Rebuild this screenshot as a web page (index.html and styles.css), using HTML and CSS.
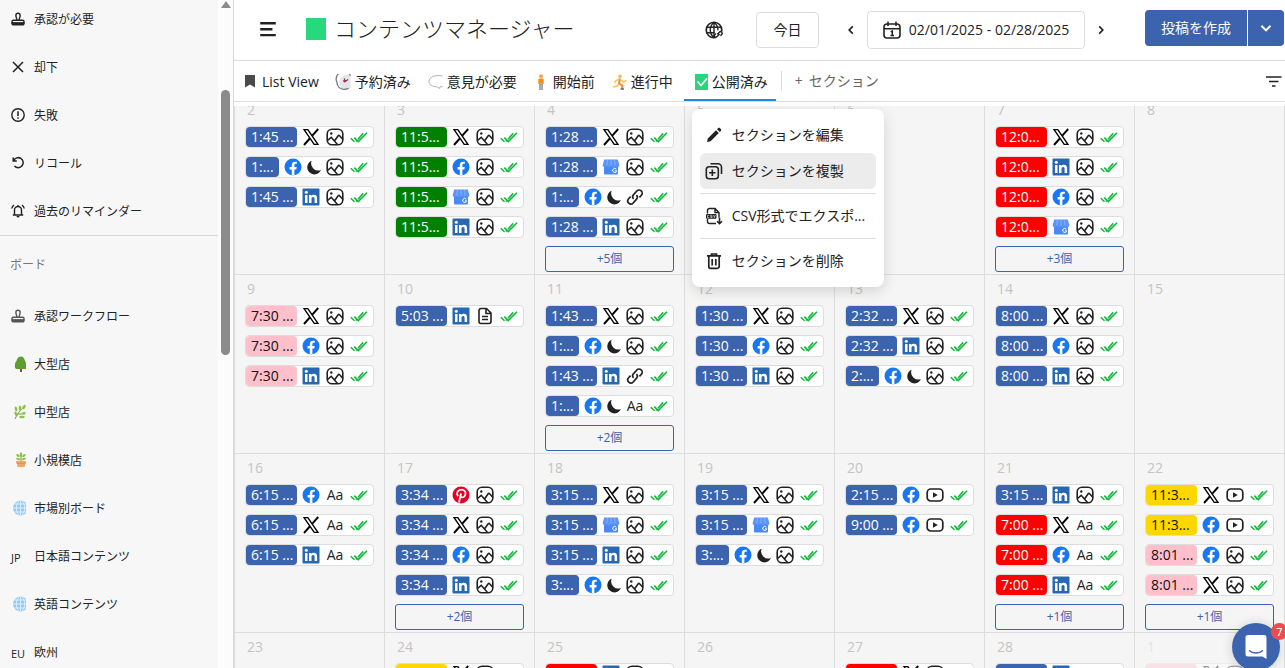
FILE: index.html
```html
<!DOCTYPE html>
<html lang="ja">
<head>
<meta charset="utf-8">
<title>コンテンツマネージャー</title>
<link rel="stylesheet" href="styles.css">
</head>
<body>
<svg class="sprite" aria-hidden="true">
  <symbol id="i-stamp" viewBox="0 0 16 16"><path d="M6.900 9.200c0-1.900-1-2.800-1-4.800a2.100 2.100 0 0 1 4.200 0c0 2-1 2.900-1 4.800M2 12V10.600c0-.8.500-1.300 1.300-1.300h9.400c.8 0 1.300.5 1.300 1.300V12z" fill="none" stroke="currentColor" stroke-width="1.400"/><path d="M1.500 11.500h13v1.500a1.500 1.500 0 0 1-1.500 1.500H3A1.500 1.500 0 0 1 1.500 13z" fill="currentColor"/></symbol>
  <symbol id="i-close" viewBox="0 0 16 16"><path d="M3 3l10 10M13 3L3 13" stroke="currentColor" stroke-width="1.500" fill="none"/></symbol>
  <symbol id="i-alert" viewBox="0 0 16 16"><circle cx="8" cy="8" r="6.200" fill="none" stroke="currentColor" stroke-width="1.400"/><path d="M8 4.300v4.700M8 10.200v1.500" stroke="currentColor" stroke-width="1.500"/></symbol>
  <symbol id="i-undo" viewBox="0 0 16 16"><path d="M3.200 2.500v3.600h3.600M3.600 5.700A5 5 0 1 1 4.500 11" fill="none" stroke="currentColor" stroke-width="1.500"/></symbol>
  <symbol id="i-bell" viewBox="0 0 16 16"><path d="M4.500 12V7a3.500 3.500 0 0 1 7 0v5M2.800 12h10.400M1.800 5.500C2 4 2.700 3 4 2.200M14.200 5.500C14 4 13.300 3 12 2.200M8 2v1.500" fill="none" stroke="currentColor" stroke-width="1.400"/><path d="M6.500 13h3a1.500 1.500 0 0 1-3 0z" fill="currentColor"/></symbol>
  <symbol id="i-tree" viewBox="0 0 16 16"><path d="M10 11h2v5h-2z" fill="#7b5336"/><path d="M11 .5c2 0 3 1.500 3.500 3 1 1.500 1.500 3 1.500 4.500V13H7c-2 0-2.500-2-2-3.500-.3-2 .5-3.500 1.500-4.500C7 2.500 8.500.5 11 .5z" fill="#5c9e31"/></symbol>
  <symbol id="i-herb" viewBox="0 0 16 16"><path d="M5 15c2-5 5-9 10-13M8 10h7" stroke="#689f38" stroke-width="1" fill="none"/><g fill="#8bc34a"><ellipse cx="6" cy="5" rx="1.300" ry="2.600" transform="rotate(-15 6 5)"/><ellipse cx="10" cy="4" rx="1.300" ry="2.600"/><ellipse cx="14" cy="3" rx="1.300" ry="2.500" transform="rotate(30 14 3)"/><ellipse cx="6" cy="10" rx="1.300" ry="2.600" transform="rotate(-30 6 10)"/><ellipse cx="12" cy="13" rx="2.800" ry="1.200"/><ellipse cx="14" cy="9" rx="2" ry="1.100"/></g></symbol>
  <symbol id="i-pot" viewBox="0 0 16 16"><path d="M11 9V3" stroke="#689f38"/><g fill="#8bc34a"><ellipse cx="11" cy="2.500" rx="1.200" ry="2.300"/><ellipse cx="8" cy="3.500" rx="2" ry="1.100" transform="rotate(35 8 3.500)"/><ellipse cx="14" cy="3.500" rx="2" ry="1.100" transform="rotate(-35 14 3.500)"/><ellipse cx="8.200" cy="7" rx="2.200" ry="1.100" transform="rotate(20 8.200 7)"/><ellipse cx="13.800" cy="7" rx="2.200" ry="1.100" transform="rotate(-20 13.800 7)"/></g><path d="M6 9h10v2.500h-.8L14.800 15H7.500L7 11.500H6z" fill="#f0a868"/><path d="M7 11.300h8.300" stroke="#cf8345" stroke-width=".7"/></symbol>
  <symbol id="i-world" viewBox="0 0 16 16"><circle cx="10.500" cy="8" r="7.500" fill="#90caf9"/><path d="M10.500.5v15M3 8h13M4.500 4h11.500M4.500 12h11.500M9 .8c-3.500 4-3.500 10.400 0 14.400M12 .8c3.500 4 3.500 10.400 0 14.400" stroke="#e3f2fd" stroke-width=".9" fill="none"/></symbol>

  <symbol id="i-bookmark" viewBox="0 0 16 16"><path d="M3 1h10v12.500l-5-3-5 3z" fill="#4a4a4a"/></symbol>
  <symbol id="i-clock" viewBox="0 0 16 16"><path d="M15.500 1.800A7 7 0 0 0 8.500 1.800 7.300 7.300 0 0 0 8 14.500c2 1.200 5 1.200 7.500.2z" fill="#e4e4e9"/><path d="M15.500 1.600A7.200 7.200 0 0 0 2 8.500c0 4 3 6.800 7 6.800 1.500 0 3-.4 4.500-1" fill="none" stroke="#777" stroke-width="1.300"/><path d="M9.500 8V4.500M9.500 8l3.500-2.500" stroke="#444" stroke-width="1.100"/><circle cx="9.500" cy="7" r="1.300" fill="#c2185b"/></symbol>
  <symbol id="i-balloon" viewBox="0 0 16 16"><path d="M15.500 2C8 .5 2 3 2 7.500c0 3 2.500 5 7.500 5.200l3 1.800.5-1.800h2.500" fill="none" stroke="#aaa" stroke-width=".9"/></symbol>
  <symbol id="i-stand" viewBox="0 0 16 16"><circle cx="8" cy="2.200" r="1.900" fill="#f3a34a"/><path d="M6 4.500h4v5H6z" fill="#f28c1b"/><path d="M5.500 5v5M10.500 5v5" stroke="#f5b942" stroke-width="1"/><path d="M6.200 9.500h3.600v6.500H8.300V10.500h-.6V16H6.200z" fill="#8d8d8d"/></symbol>
  <symbol id="i-run" viewBox="0 0 16 16"><circle cx="9" cy="2.200" r="1.800" fill="#ffb74d"/><path d="M9 4.500L8 9.500l3.500 2-.5 3.500" stroke="#f08a24" stroke-width="2" fill="none"/><path d="M8.500 5L5 6.500 3.500 9M9.500 5.500l3 2.500 3-1.500M8 9.500L6 12l-4 1" stroke="#ffbf5b" stroke-width="1.500" fill="none"/><path d="M9.500 15h3.500" stroke="#5b6f7c" stroke-width="1.500"/></symbol>
  <symbol id="i-done" viewBox="0 0 16 16"><path d="M3 0h13v16H3z" fill="#25d67b"/><path d="M5.500 7.500l3.500 4 6-7" stroke="#fff" stroke-width="1.800" fill="none"/></symbol>
  <symbol id="i-filter" viewBox="0 0 16 16"><path d="M0 4h15.500M3 8.500h9.500M6 13h3.500" stroke="#222" stroke-width="1.700"/></symbol>

  <symbol id="i-menu" viewBox="0 0 18 18"><path d="M2 3h14M2 8.300h11M2 13.600h14" stroke="#222" stroke-width="2.200"/></symbol>
  <symbol id="i-globe" viewBox="0 0 18 18"><circle cx="9" cy="9" r="7" fill="none" stroke="#222" stroke-width="1.500"/><path d="M9 2v14M2 6.500h14M2 11.500h9M9 2c-4.500 4-4.500 10 0 14M9 2c3 2.500 3.800 4.500 3.600 7.500" fill="none" stroke="#222" stroke-width="1.300"/><circle cx="13" cy="13" r="3.500" fill="#fff"/><path d="M12 12.800l2-2a1.500 1.500 0 0 1 2.100 2.100l-1.300 1.300M14 12.500l-2.700 2.700a1.300 1.300 0 0 1-1.700-1.900l1.200-1.200" fill="none" stroke="#222" stroke-width="1.300"/></symbol>
  <symbol id="i-calendar" viewBox="0 0 18 18"><rect x="1" y="3" width="16" height="14" rx="3" fill="none" stroke="#222" stroke-width="1.600"/><path d="M1 7.700h16M5 .5v4.500M13 .5v4.500M7.800 10.800L9.300 10v4.500M7.500 14.500h3.500" stroke="#222" stroke-width="1.500" fill="none"/></symbol>
  <symbol id="i-left" viewBox="0 0 10 10"><path d="M6.500 2L3.500 5l3 3" fill="none" stroke="#222" stroke-width="1.400"/></symbol>
  <symbol id="i-right" viewBox="0 0 10 10"><path d="M3.500 2l3 3-3 3" fill="none" stroke="#222" stroke-width="1.400"/></symbol>
  <symbol id="i-down" viewBox="0 0 10 10"><path d="M1.200 3.200L5 7l3.800-3.800" fill="none" stroke="#fff" stroke-width="1.700"/></symbol>

  <symbol id="i-pencil" viewBox="0 0 18 18"><path d="M2 16l.8-3.600L11 4.200l2.800 2.800-8.200 8.200zM12 3.200l1-1c.6-.6 1.400-.6 2 0l.8.8c.6.6.6 1.400 0 2l-1 1z" fill="#222"/></symbol>
  <symbol id="i-copy" viewBox="0 0 18 18"><rect x="1.300" y="4.800" width="12" height="12" rx="2.800" fill="none" stroke="#222" stroke-width="1.600"/><path d="M7.300 7.600v6.400M4.100 10.800h6.400M5.500 1.800h7.500a3.500 3.500 0 0 1 3.500 3.500v6.700" fill="none" stroke="#222" stroke-width="1.600"/></symbol>
  <symbol id="i-csv" viewBox="0 0 18 18"><path d="M2.500 6.500V3.500a2 2 0 0 1 2-2H10l4 4v5M10 1.500v4h4M2.500 12v2.500a2 2 0 0 0 2 2H11" fill="none" stroke="#222" stroke-width="1.400"/><rect x="1" y="7" width="10.500" height="4.800" rx="1" fill="#222"/><path d="M4.200 8.300H2.500v2.300h1.700M7.300 8.300H5.600v1.100h1.500v1.200H5.500M8.500 8l.9 2.600.9-2.600" fill="none" stroke="#fff" stroke-width=".6"/><path d="M14.500 10.500v6M12 14.200l2.500 2.500 2.500-2.500" fill="none" stroke="#222" stroke-width="1.600"/></symbol>
  <symbol id="i-trash" viewBox="0 0 18 18"><path d="M2 3.800h14M6.500 3.500V2h5v1.500M3.800 4v10.500a1.800 1.800 0 0 0 1.800 1.800h6.800a1.800 1.800 0 0 0 1.800-1.800V4M7.200 7v6.500M10.800 7v6.500" fill="none" stroke="#222" stroke-width="1.700"/></symbol>

  <symbol id="i-x" viewBox="0 0 18 18"><path d="M.8 1h5.400l11 16h-5.400zM3.300 2.200l9.300 13.600h2.100L5.400 2.200z" fill="#000" fill-rule="evenodd"/><path d="M16.200 1L10.300 7.600M7.800 10.500L2 17" stroke="#000" stroke-width="1.900"/></symbol>
  <symbol id="i-facebook" viewBox="0 0 18 18"><circle cx="9" cy="9" r="8.500" fill="#1877f2"/><path d="M7.800 17.500v-6H5.600V9h2.200V7.100c0-2.200 1.300-3.400 3.300-3.400.9 0 1.700.1 1.700.1v2h-1c-1 0-1.400.6-1.400 1.300V9h2.300l-.4 2.500h-1.900v6z" fill="#fff"/></symbol>
  <symbol id="i-linkedin" viewBox="0 0 18 18"><rect x=".5" y=".5" width="17" height="17" rx="1" fill="#2867b2"/><path d="M3 7h2.500v8H3zM7 7h2.400v1.100c.5-.8 1.400-1.300 2.500-1.300 2.300 0 3.200 1.400 3.200 3.700V15h-2.500v-4c0-1.200-.3-2.100-1.500-2.100S9.500 9.800 9.500 11v4H7z" fill="#fff"/><circle cx="4.300" cy="4.300" r="1.500" fill="#fff"/></symbol>
  <symbol id="i-business" viewBox="0 0 18 18"><path d="M2 7h14v8.500a1 1 0 0 1-1 1H3a1 1 0 0 1-1-1z" fill="#4989f5"/><path d="M2.200 1.500h13.600L17.300 7a2 2 0 0 1-4.100.5A2.100 2.100 0 0 1 9 7.500a2.100 2.100 0 0 1-4.200 0A2 2 0 0 1 .7 7z" fill="#5b94f8"/><path d="M5.500 1.500L4.800 7.500M9 1.500v6M12.500 1.500l.7 6" stroke="#a5c4fb" stroke-width=".6"/><path d="M14.300 11.200a2 2 0 1 0 .4 1.600h-1.700" fill="none" stroke="#fff" stroke-width="1"/></symbol>
  <symbol id="i-pinterest" viewBox="0 0 18 18"><circle cx="9" cy="9" r="8.500" fill="#e60023"/><path d="M7 16.500L9 7.500M6 10.200c-2.200-3.200-.1-6.500 3.400-6.500 3 0 4.600 2 4 4.600-.6 3.200-3.900 4-5 1.900" fill="none" stroke="#fff" stroke-width="1.800"/></symbol>
  <symbol id="i-image" viewBox="0 0 18 18"><rect x="1.200" y="1.200" width="15.600" height="15.600" rx="4.800" fill="none" stroke="#222" stroke-width="1.600"/><circle cx="5.300" cy="5.500" r="1.200" fill="#222"/><path d="M1.500 12.500L5.200 9.300l6.300 7.200M8.800 12.500l3.400-4.800c.4-.5 1-.5 1.400 0L17 11.500" fill="none" stroke="#222" stroke-width="1.600"/></symbol>
  <symbol id="i-video" viewBox="0 0 18 18"><rect x="1.200" y="3" width="15.600" height="12" rx="3.500" fill="none" stroke="#222" stroke-width="1.700"/><path d="M7 6.300L11.800 9 7 11.700z" fill="#222"/></symbol>
  <symbol id="i-link" viewBox="0 0 18 18"><path d="M7.600 10.800a3 3 0 0 1 0-4.200l3.200-3.600a3 3 0 0 1 4.600 4.200l-2 2.200M10.400 7.200a3 3 0 0 1 0 4.200L7.200 15a3 3 0 0 1-4.600-4.200l2-2.200" fill="none" stroke="#222" stroke-width="1.700"/></symbol>
  <symbol id="i-doc" viewBox="0 0 18 18"><path d="M3 3.500a2 2 0 0 1 2-2h5.500L15 6v8.500a2 2 0 0 1-2 2H5a2 2 0 0 1-2-2zM10 1.500v5h5M6 9.500h6M6 12.500h6" fill="none" stroke="#222" stroke-width="1.600"/></symbol>
  <symbol id="i-moon" viewBox="0 0 18 18"><path d="M6.300 2A8.200 8.200 0 0 0 16.800 12.500 8 8 0 1 1 6.300 2z" fill="#222"/></symbol>
  <symbol id="i-check" viewBox="0 0 18 18"><path d="M.8 10.200l3.700 3.600M4.300 9.600l4 4L17 4.800M5.800 13.500l1-1M8 11.200l5.200-5.800" fill="none" stroke="#12b83c" stroke-width="1.600"/></symbol>
</svg>

<div class="app">
  <nav class="sidebar">
    <ul class="side-list side-top">
      <li><a href="#"><svg><use href="#i-stamp"/></svg>承認が必要</a></li>
      <li><a href="#"><svg><use href="#i-close"/></svg>却下</a></li>
      <li><a href="#"><svg><use href="#i-alert"/></svg>失敗</a></li>
      <li><a href="#"><svg><use href="#i-undo"/></svg>リコール</a></li>
      <li><a href="#"><svg><use href="#i-bell"/></svg>過去のリマインダー</a></li>
    </ul>
    <h2 class="side-heading">ボード</h2>
    <ul class="side-list">
      <li><a href="#"><svg class="muted"><use href="#i-stamp"/></svg>承認ワークフロー</a></li>
      <li><a href="#"><svg><use href="#i-tree"/></svg>大型店</a></li>
      <li><a href="#"><svg><use href="#i-herb"/></svg>中型店</a></li>
      <li><a href="#"><svg><use href="#i-pot"/></svg>小規模店</a></li>
      <li><a href="#"><svg><use href="#i-world"/></svg>市場別ボード</a></li>
      <li><a href="#"><span class="code">JP</span>日本語コンテンツ</a></li>
      <li><a href="#"><svg><use href="#i-world"/></svg>英語コンテンツ</a></li>
      <li><a href="#"><span class="code">EU</span>欧州</a></li>
    </ul>
  </nav>
  <div class="scroll-track"><span class="scroll-arrow"></span><span class="scroll-thumb"></span></div>

  <main class="main">
    <header class="header">
      <button class="icon-btn" aria-label="メニュー"><svg><use href="#i-menu"/></svg></button>
      <span class="swatch"></span>
      <h1 class="title">コンテンツマネージャー</h1>
      <button class="icon-btn globe" aria-label="共有"><svg><use href="#i-globe"/></svg></button>
      <button class="today">今日</button>
      <div class="range">
        <button class="step" aria-label="前へ"><svg><use href="#i-left"/></svg></button>
        <button class="dates"><svg><use href="#i-calendar"/></svg>02/01/2025 - 02/28/2025</button>
        <button class="step" aria-label="次へ"><svg><use href="#i-right"/></svg></button>
      </div>
      <div class="create">
        <button class="create-main">投稿を作成</button>
        <button class="create-more" aria-label="その他"><svg><use href="#i-down"/></svg></button>
      </div>
    </header>

    <div class="tabs">
      <button class="tab"><svg><use href="#i-bookmark"/></svg>List View</button>
      <button class="tab"><svg><use href="#i-clock"/></svg>予約済み</button>
      <button class="tab"><svg><use href="#i-balloon"/></svg>意見が必要</button>
      <button class="tab"><svg><use href="#i-stand"/></svg>開始前</button>
      <button class="tab"><svg><use href="#i-run"/></svg>進行中</button>
      <div class="tab-wrap">
        <button class="tab active"><svg><use href="#i-done"/></svg>公開済み</button>
        <div class="menu">
          <button class="menu-item"><svg><use href="#i-pencil"/></svg>セクションを編集</button>
          <button class="menu-item hover"><svg><use href="#i-copy"/></svg>セクションを複製</button>
          <hr>
          <button class="menu-item"><svg><use href="#i-csv"/></svg>CSV形式でエクスポ...</button>
          <hr>
          <button class="menu-item"><svg><use href="#i-trash"/></svg>セクションを削除</button>
        </div>
      </div>
      <button class="add-section"><span>+</span>セクション</button>
      <button class="filter" aria-label="フィルター"><svg><use href="#i-filter"/></svg></button>
    </div>

    <div class="calendar"><div class="grid" id="grid"></div></div>
  </main>
</div>

<button class="chat" aria-label="チャット">
  <svg viewBox="0 0 24 26"><path d="M4 1h16a2.500 2.500 0 0 1 2.500 2.500V25l-4-2.500H4A2.500 2.500 0 0 1 1.500 20V3.500A2.500 2.500 0 0 1 4 1z" fill="#fff"/><path d="M5 16.500c4 3.300 10 3.300 14 0" fill="none" stroke="#3b63ae" stroke-width="1.500"/></svg>
  <span class="badge">7</span>
</button>
<script src="app.js"></script>
</body>
</html>
```
FILE: styles.css
```css
* { box-sizing: border-box; }
body {
  margin: 0;
  font: 14px/20px "Open Sans", "Noto Sans CJK JP", sans-serif;
  color: #222;
  background: #fff;
}
button {
  font: inherit;
  color: inherit;
  background: none;
  border: 0;
  padding: 0;
  white-space: nowrap;
}
ul { list-style: none; margin: 0; padding: 0; }
a { color: inherit; text-decoration: none; }
svg { display: block; flex: none; }
.sprite { position: absolute; width: 0; height: 0; }

.app { display: flex; height: 100vh; overflow: hidden; }

.sidebar { flex: 0 0 218px; background: #f7f7f7; overflow: hidden; font-size: 12px; }
.side-top { margin-top: -5px; border-bottom: 1px solid #d8d8d8; }
.side-list a { display: flex; align-items: center; gap: 8px; height: 48px; padding: 2px 0 0 10px; }
.side-list svg { width: 16px; height: 16px; margin-bottom: 2px; }
.side-list .muted { color: #555; }
.code { width: 16px; font-size: 11px; font-weight: 500; padding: 1px 0 0 1px; white-space: nowrap; }
.side-heading { margin: 0; padding: 19px 10px 17px; font-size: 12px; font-weight: 400; color: #777; }

.scroll-track { flex: 0 0 16px; display: flex; flex-direction: column; align-items: center; background: #fcfcfc; border-right: 1px solid #d8d8d8; }
.scroll-arrow { border: 5px solid transparent; border-top: 0; border-bottom: 7px solid #8b8b8b; margin: 1px 0 82px; }
.scroll-thumb { width: 9px; height: 265px; border-radius: 5px; background: #8b8b8b; }

.main { flex: 1; min-width: 0; display: flex; flex-direction: column; }

.header { display: flex; align-items: center; height: 61px; padding: 0 1px 0 24px; border-bottom: 1px solid #ddd; }
.icon-btn svg { width: 20px; height: 20px; }
.swatch { width: 20px; height: 22px; margin: 0 8px 2px 28px; background: #25d97c; }
.title { margin: 0 0 4px; font-size: 22px; line-height: 32px; font-weight: 300; white-space: nowrap; }
.globe { margin-left: auto; }
.today { width: 63px; height: 36px; margin: 0 22px 0 32px; border: 1px solid #ddd; border-radius: 4px; }
.range { display: flex; align-items: center; gap: 6px; }
.step svg { width: 20px; height: 12px; }
.dates { display: flex; align-items: center; justify-content: center; gap: 8px; width: 218px; height: 38px; border: 1px solid #ddd; border-radius: 4px; }
.dates svg { width: 18px; height: 18px; }
.create { display: flex; height: 36px; margin: 0 0 4px 34px; border-radius: 4px; overflow: hidden; color: #fff; }
.create-main { width: 102px; background: #3b63ae; }
.create-more { width: 37px; border-left: 1px solid #fff; background: #3b63ae; }
.create-more svg { width: 12px; height: 12px; margin: auto; }

.tabs { display: flex; align-items: stretch; height: 41px; border-bottom: 1px solid #ddd; }
.tab { display: flex; align-items: center; gap: 4px; height: 40px; padding: 3px 8px 0; border-bottom: 2px solid transparent; }
.tab svg { width: 16px; height: 16px; }
.tab.active { border-bottom-color: #1e88e5; }
.tab-wrap { position: relative; margin-left: 3px; }
.add-section { display: flex; gap: 6px; align-self: center; height: 20px; margin-left: 5px; padding-left: 13px; border-left: 1px solid #ddd; color: #666; }
.filter { margin-left: auto; padding-right: 3px; }
.filter svg { width: 16px; height: 16px; }

.menu { position: absolute; z-index: 2; top: 48px; left: 8px; width: 192px; padding: 8px; border-radius: 8px; background: #fff; box-shadow: 0 4px 14px rgba(0, 0, 0, .14); }
.menu-item { display: flex; align-items: center; gap: 9px; width: 100%; height: 36px; padding: 0 5px; border-radius: 6px; }
.menu-item.hover { background: #ececec; }
.menu-item svg { width: 18px; height: 18px; }
.menu hr { margin: 4px 0; border: 0; border-top: 1px solid #ddd; }

.calendar { flex: 1; min-height: 0; margin-top: 4px; overflow: hidden; background: #f5f5f5; }
.grid { display: grid; grid-template-columns: repeat(7, 1fr); margin-top: -10px; border-left: 1px solid #ddd; }
.day { display: flex; flex-direction: column; gap: 8px; min-height: 179px; min-width: 0; padding: 4px 10px 2px; border: solid #ddd; border-width: 0 1px 1px 0; }
.num { padding: 0 2px; height: 18px; color: #c4c4c4; }
.post { display: flex; align-items: center; height: 22px; padding-right: 2px; border: 1px solid #ddd; border-radius: 4px; background: #fff; }
.time { flex: 1; min-width: 0; margin-right: 2px; padding-left: 5px; border-radius: 4px; color: #fff; white-space: nowrap; overflow: hidden; }
.post svg { width: 18px; height: 18px; margin: 0 3px; }
.post .moon { width: 16px; height: 16px; margin: 0 1px; }
.aa { width: 24px; font-size: 14px; font-weight: 500; text-align: center; }
.blue { background: #3b63ae; }
.green { background: #008000; }
.red { background: #f00; }
.pink { background: #ffc0cb; color: #111; }
.yellow { background: #ffd700; color: #111; }
.more { height: 26px; border: 1px solid #3b63ae; border-radius: 3px; color: #3b63ae; font-size: 12px; }
.outside > * { opacity: .35; }

.chat { position: fixed; z-index: 3; right: 5px; bottom: -3px; width: 48px; height: 48px; border-radius: 50%; background: #3b63ae; box-shadow: 0 1px 12px rgba(0, 0, 0, .16); }
.chat svg { width: 24px; height: 26px; margin: auto; }
.badge { position: absolute; top: 0; right: -8px; width: 17px; height: 17px; border-radius: 50%; background: #f9484b; color: #fff; font-size: 11px; font-weight: 600; line-height: 17px; text-align: center; }
```
FILE: app.js
```js
// Each post: colour, time label, network, media type, optional dark-post flag.
const days = [
  [2, ['blue|1:45 ...|x|image', 'blue|1:...|facebook|image|moon', 'blue|1:45 ...|linkedin|image']],
  [3, ['green|11:5...|x|image', 'green|11:5...|facebook|image', 'green|11:5...|business|image', 'green|11:5...|linkedin|image']],
  [4, ['blue|1:28 ...|x|image', 'blue|1:28 ...|business|image', 'blue|1:...|facebook|link|moon', 'blue|1:28 ...|linkedin|image'], 5],
  [5, []],
  [6, []],
  [7, ['red|12:0...|x|image', 'red|12:0...|linkedin|image', 'red|12:0...|facebook|image', 'red|12:0...|business|image'], 3],
  [8, []],
  [9, ['pink|7:30 ...|x|image', 'pink|7:30 ...|facebook|image', 'pink|7:30 ...|linkedin|image']],
  [10, ['blue|5:03 ...|linkedin|doc']],
  [11, ['blue|1:43 ...|x|image', 'blue|1:...|facebook|image|moon', 'blue|1:43 ...|linkedin|link', 'blue|1:...|facebook|aa|moon'], 2],
  [12, ['blue|1:30 ...|x|image', 'blue|1:30 ...|facebook|image', 'blue|1:30 ...|linkedin|image']],
  [13, ['blue|2:32 ...|x|image', 'blue|2:32 ...|linkedin|image', 'blue|2:...|facebook|image|moon']],
  [14, ['blue|8:00 ...|x|image', 'blue|8:00 ...|facebook|image', 'blue|8:00 ...|linkedin|image']],
  [15, []],
  [16, ['blue|6:15 ...|facebook|aa', 'blue|6:15 ...|x|aa', 'blue|6:15 ...|linkedin|aa']],
  [17, ['blue|3:34 ...|pinterest|image', 'blue|3:34 ...|x|image', 'blue|3:34 ...|facebook|image', 'blue|3:34 ...|linkedin|image'], 2],
  [18, ['blue|3:15 ...|x|image', 'blue|3:15 ...|business|image', 'blue|3:15 ...|linkedin|image', 'blue|3:...|facebook|image|moon']],
  [19, ['blue|3:15 ...|x|image', 'blue|3:15 ...|business|image', 'blue|3:...|facebook|image|moon']],
  [20, ['blue|2:15 ...|facebook|video', 'blue|9:00 ...|facebook|video']],
  [21, ['blue|3:15 ...|linkedin|image', 'red|7:00 ...|x|aa', 'red|7:00 ...|facebook|aa', 'red|7:00 ...|linkedin|aa'], 1],
  [22, ['yellow|11:3...|x|video', 'yellow|11:3...|facebook|video', 'pink|8:01 ...|facebook|image', 'pink|8:01 ...|x|image'], 1],
  [23, []],
  [24, ['yellow||x|image']],
  [25, ['red||linkedin|image']],
  [26, []],
  [27, ['red||x|image']],
  [28, ['blue||linkedin|aa']],
  [1, ['pink||x|image'], 0, 'outside']
];

const icon = (name, cls = '') => `<svg class="${cls}"><use href="#i-${name}"/></svg>`;

const post = (entry) => {
  const [color, time, network, media, flag] = entry.split('|');
  return `<div class="post"><span class="time ${color}">${time || '&nbsp;'}</span>${icon(network)}` +
    (flag ? icon(flag, flag) : '') +
    (media === 'aa' ? '<span class="aa">Aa</span>' : icon(media)) +
    icon('check') + '</div>';
};

document.getElementById('grid').innerHTML = days.map(([num, posts, more, cls]) =>
  `<section class="day ${cls || ''}"><span class="num">${num}</span>${posts.map(post).join('')}` +
  (more ? `<button class="more">+${more}個</button>` : '') + '</section>').join('');
```
